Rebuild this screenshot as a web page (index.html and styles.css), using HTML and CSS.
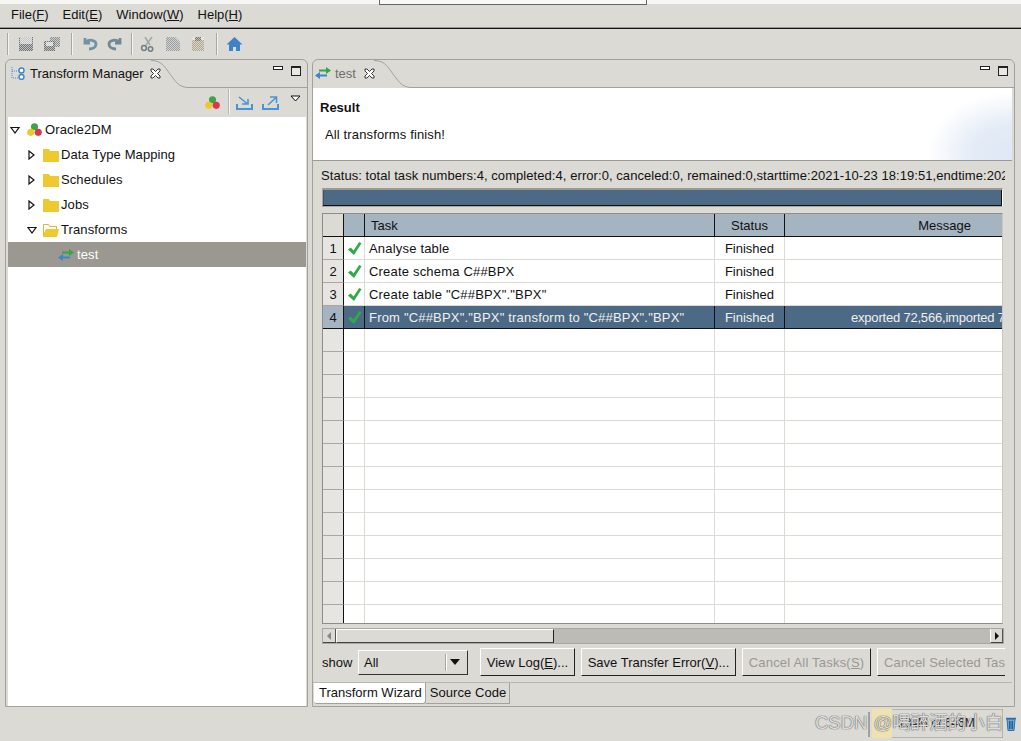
FILE: index.html
```html
<!DOCTYPE html>
<html lang="en">
<head>
<meta charset="utf-8">
<title>Oracle2DM Transform Manager</title>
<link rel="stylesheet" href="styles.css">
</head>
<body>
<svg class="defs" width="0" height="0" aria-hidden="true"><defs>
  <pattern id="hatch" width="2" height="2" patternUnits="userSpaceOnUse"><rect width="1" height="1" fill="#fff" fill-opacity=".55"/><rect x="1" y="1" width="1" height="1" fill="#fff" fill-opacity=".55"/></pattern>
</defs></svg>
<div class="app">
  <div class="top-strip"><span class="strip-tab"></span></div>
  <nav class="menubar">
    <span class="menu">File(<u>F</u>)</span>
    <span class="menu">Edit(<u>E</u>)</span>
    <span class="menu">Window(<u>W</u>)</span>
    <span class="menu">Help(<u>H</u>)</span>
  </nav>
  <div class="toolbar">
    <span class="sep"></span>
    <svg class="tool" viewBox="0 0 16 16"><rect x="1" y="1" width="14" height="14" fill="#6f7476"/><rect x="2" y="1" width="12" height="7" fill="#c4c4c2"/><rect x="1" y="1" width="14" height="14" fill="url(#hatch)"/></svg>
    <svg class="tool wide" viewBox="0 0 18 16"><rect x="7" y="1" width="10" height="10" fill="#8f8f8d"/><rect x="1" y="5" width="11" height="10" fill="#6f7476"/><rect x="3" y="6" width="7" height="4" fill="#d0d0ce"/><path d="M7 1h10v10h-5v4H1V5h6z" fill="url(#hatch)"/></svg>
    <span class="sep s2"></span>
    <svg class="tool" viewBox="0 0 16 16"><path d="M3 2v5h5M4 6c3-3 10-2 10 2 0 3-3 5-7 5" fill="none" stroke="#6f94a6" stroke-width="2.800"/></svg>
    <svg class="tool" viewBox="0 0 16 16"><path d="M13 2v5H8M12 6C9 3 2 4 2 8c0 3 3 5 7 5" fill="none" stroke="#6f8a96" stroke-width="2.800"/></svg>
    <span class="sep s3"></span>
    <svg class="tool" viewBox="0 0 16 16"><path d="M12 1 6 9M5 1l5 8" fill="none" stroke="#a5a8a8" stroke-width="1.600"/><circle cx="4" cy="12" r="2.400" fill="none" stroke="#6f7f88" stroke-width="1.500"/><circle cx="10.500" cy="13" r="2.200" fill="none" stroke="#6f7f88" stroke-width="1.500"/></svg>
    <svg class="tool" viewBox="0 0 16 16"><path d="M1 1h9l5 5v9H1z" fill="#9a9d9d"/><path d="M1 1h9l5 5v9H1z" fill="url(#hatch)"/></svg>
    <svg class="tool" viewBox="0 0 16 16"><path d="M2 4h12v11H2z" fill="#b0a58e"/><path d="M5 1h6v4H5z" fill="#77746c"/><path d="M2 1h12v14H2z" fill="url(#hatch)"/></svg>
    <span class="sep s4"></span>
    <svg class="tool home" viewBox="0 0 16 16"><path d="M8 1 0 8.500h2.500V15h4v-4h3v4h4V8.500H16z" fill="#3d83c6"/></svg>
  </div>

  <div class="workspace">
    <section class="panel left">
      <header class="panel-head">
        <div class="tab long">
          <svg class="tab-ic" viewBox="0 0 14 14"><path d="M1 1v11h8M1 5h8" fill="none" stroke="#4a8ccc" stroke-dasharray="1 1"/><circle cx="10.500" cy="4.500" r="2.500" fill="#fff" stroke="#3f86c9" stroke-width="1.400"/><circle cx="10.500" cy="11" r="2.500" fill="#fff" stroke="#3f86c9" stroke-width="1.400"/></svg>
          <span class="tab-label">Transform Manager</span>
          <svg class="close" viewBox="0 0 11 11"><path d="M1 1h2l2.500 2.500L8 1h2v2L7.500 5.500 10 8v2H8L5.500 7.500 3 10H1V8l2.500-2.500L1 3z" fill="#fff" stroke="#222" stroke-width=".9"/></svg>
          <svg class="curve" viewBox="0 0 36 28"><path d="M0 .5C12 .5 14 8 22 18 27 25 30 26.500 36 27.500" fill="none" stroke="#a3a19c"/></svg>
        </div>
        <div class="win-btns"><span class="min"></span><span class="max"></span></div>
      </header>
      <div class="view-tools">
        <svg class="dots" viewBox="0 0 16 16"><circle cx="8" cy="5" r="3.800" fill="#3aa648"/><circle cx="4" cy="11" r="3.800" fill="#edc82c"/><circle cx="12" cy="11" r="3.800" fill="#d9364f"/></svg>
        <span class="vsep"></span>
        <svg class="io" viewBox="0 0 17 14"><path d="M1 8v5h15V8" fill="none" stroke="#4a94d6" stroke-width="2"/><path d="M3 1l8 6.500M12 3v5H6" fill="none" stroke="#4a94d6" stroke-width="1.600"/></svg>
        <svg class="io" viewBox="0 0 17 14"><path d="M1 8v5h15V8" fill="none" stroke="#4a94d6" stroke-width="2"/><path d="M6 9l8-7.500M8 1h6.500v6" fill="none" stroke="#4a94d6" stroke-width="1.600"/></svg>
        <svg class="menu-tri" viewBox="0 0 11 7"><path d="M1 1h9L5.500 6z" fill="#fff" stroke="#111"/></svg>
      </div>
      <div class="tree">
        <div class="node n0"><svg class="tw" viewBox="0 0 10 9"><path d="M1 2h8L5 7.500z" fill="#fff" stroke="#111" stroke-width="1.200"/></svg><svg class="dots small" viewBox="0 0 16 16"><circle cx="8" cy="5" r="3.800" fill="#3aa648"/><circle cx="4" cy="11" r="3.800" fill="#edc82c"/><circle cx="12" cy="11" r="3.800" fill="#d9364f"/></svg><span>Oracle2DM</span></div>
        <div class="node n1"><svg class="tw" viewBox="0 0 10 10"><path d="M2 1v8l5-4z" fill="#fff" stroke="#111" stroke-width="1.200"/></svg><svg class="folder" viewBox="0 0 16 14"><path d="M0 1h6l1 2h9v11H0z" fill="#eec92f"/></svg><span>Data Type Mapping</span></div>
        <div class="node n1"><svg class="tw" viewBox="0 0 10 10"><path d="M2 1v8l5-4z" fill="#fff" stroke="#111" stroke-width="1.200"/></svg><svg class="folder" viewBox="0 0 16 14"><path d="M0 1h6l1 2h9v11H0z" fill="#eec92f"/></svg><span>Schedules</span></div>
        <div class="node n1"><svg class="tw" viewBox="0 0 10 10"><path d="M2 1v8l5-4z" fill="#fff" stroke="#111" stroke-width="1.200"/></svg><svg class="folder" viewBox="0 0 16 14"><path d="M0 1h6l1 2h9v11H0z" fill="#eec92f"/></svg><span>Jobs</span></div>
        <div class="node n1"><svg class="tw" viewBox="0 0 10 9"><path d="M1 2h8L5 7.500z" fill="#fff" stroke="#111" stroke-width="1.200"/></svg><svg class="folder" viewBox="0 0 16 14"><path d="M.5 1.500h5l1 2h7V7H3L.5 13z" fill="#fff" stroke="#d9b92e"/><path d="M3 6h13l-2 8H0z" fill="#eec92f"/></svg><span>Transforms</span></div>
        <div class="node n2 selected"><svg class="arrows" viewBox="0 0 16 14"><path d="M4 4.500h8" stroke="#35a548" stroke-width="2"/><path d="M11 1l5 3.500L11 8z" fill="#35a548"/><path d="M12 9.500H4" stroke="#3f86c9" stroke-width="2"/><path d="M5 6l-5 3.500L5 13z" fill="#3f86c9"/></svg><span>test</span></div>
      </div>
    </section>

    <section class="panel right">
      <header class="panel-head">
        <div class="tab short">
          <svg class="arrows" viewBox="0 0 16 14"><path d="M4 4.500h8" stroke="#35a548" stroke-width="2"/><path d="M11 1l5 3.500L11 8z" fill="#35a548"/><path d="M12 9.500H4" stroke="#3f86c9" stroke-width="2"/><path d="M5 6l-5 3.500L5 13z" fill="#3f86c9"/></svg>
          <span class="tab-label grey">test</span>
          <svg class="close" viewBox="0 0 11 11"><path d="M1 1h2l2.500 2.500L8 1h2v2L7.500 5.500 10 8v2H8L5.500 7.500 3 10H1V8l2.500-2.500L1 3z" fill="#fff" stroke="#222" stroke-width=".9"/></svg>
          <svg class="curve" viewBox="0 0 36 28"><path d="M0 .5C12 .5 14 8 22 18 27 25 30 26.500 36 27.500" fill="none" stroke="#a3a19c"/></svg>
        </div>
        <div class="win-btns"><span class="min"></span><span class="max"></span></div>
      </header>
      <div class="result">
        <h1>Result</h1>
        <p>All transforms finish!</p>
      </div>
      <div class="content">
        <div class="status-line">Status: total task numbers:4, completed:4, error:0, canceled:0, remained:0,starttime:2021-10-23 18:19:51,endtime:202</div>
        <div class="progress"></div>
        <div class="grid-wrap">
          <div class="row head">
            <div class="c num"></div><div class="c ico"></div><div class="c task">Task</div><div class="c stat">Status</div><div class="c msg">Message</div>
          </div>
          <div class="row"><div class="c num">1</div><div class="c ico"><svg class="check" viewBox="0 0 16 16"><path d="M1 9l3-2 3 3 6-9 2.500 1.500L7.500 15z" fill="#2eaa4a"/></svg></div><div class="c task">Analyse table</div><div class="c stat">Finished</div><div class="c msg"></div></div>
          <div class="row"><div class="c num">2</div><div class="c ico"><svg class="check" viewBox="0 0 16 16"><path d="M1 9l3-2 3 3 6-9 2.500 1.500L7.500 15z" fill="#2eaa4a"/></svg></div><div class="c task">Create schema C##BPX</div><div class="c stat">Finished</div><div class="c msg"></div></div>
          <div class="row"><div class="c num">3</div><div class="c ico"><svg class="check" viewBox="0 0 16 16"><path d="M1 9l3-2 3 3 6-9 2.500 1.500L7.500 15z" fill="#2eaa4a"/></svg></div><div class="c task">Create table "C##BPX"."BPX"</div><div class="c stat">Finished</div><div class="c msg"></div></div>
          <div class="row sel"><div class="c num">4</div><div class="c ico"><svg class="check" viewBox="0 0 16 16"><path d="M1 9l3-2 3 3 6-9 2.500 1.500L7.500 15z" fill="#2eaa4a"/></svg></div><div class="c task">From "C##BPX"."BPX" transform to "C##BPX"."BPX"</div><div class="c stat">Finished</div><div class="c msg">exported 72,566,imported 7</div></div>
          <div class="row"><div class="c num"></div><div class="c ico"></div><div class="c task"></div><div class="c stat"></div><div class="c msg"></div></div>
          <div class="row"><div class="c num"></div><div class="c ico"></div><div class="c task"></div><div class="c stat"></div><div class="c msg"></div></div>
          <div class="row"><div class="c num"></div><div class="c ico"></div><div class="c task"></div><div class="c stat"></div><div class="c msg"></div></div>
          <div class="row"><div class="c num"></div><div class="c ico"></div><div class="c task"></div><div class="c stat"></div><div class="c msg"></div></div>
          <div class="row"><div class="c num"></div><div class="c ico"></div><div class="c task"></div><div class="c stat"></div><div class="c msg"></div></div>
          <div class="row"><div class="c num"></div><div class="c ico"></div><div class="c task"></div><div class="c stat"></div><div class="c msg"></div></div>
          <div class="row"><div class="c num"></div><div class="c ico"></div><div class="c task"></div><div class="c stat"></div><div class="c msg"></div></div>
          <div class="row"><div class="c num"></div><div class="c ico"></div><div class="c task"></div><div class="c stat"></div><div class="c msg"></div></div>
          <div class="row"><div class="c num"></div><div class="c ico"></div><div class="c task"></div><div class="c stat"></div><div class="c msg"></div></div>
          <div class="row"><div class="c num"></div><div class="c ico"></div><div class="c task"></div><div class="c stat"></div><div class="c msg"></div></div>
          <div class="row"><div class="c num"></div><div class="c ico"></div><div class="c task"></div><div class="c stat"></div><div class="c msg"></div></div>
          <div class="row"><div class="c num"></div><div class="c ico"></div><div class="c task"></div><div class="c stat"></div><div class="c msg"></div></div>
          <div class="row"><div class="c num"></div><div class="c ico"></div><div class="c task"></div><div class="c stat"></div><div class="c msg"></div></div>
        </div>
        <div class="hscroll">
          <span class="sb-btn"><span class="tri-l"></span></span>
          <span class="sb-thumb"></span>
          <span class="sb-track"></span>
          <span class="sb-btn"><span class="tri-r"></span></span>
        </div>
        <div class="actions">
          <span class="show">show</span>
          <div class="combo"><span class="combo-val">All</span><span class="combo-sep"></span><span class="combo-arrow"></span></div>
          <button class="btn b1">View Log(<u>E</u>)...</button>
          <button class="btn b2">Save Transfer Error(<u>V</u>)...</button>
          <button class="btn b3 off">Cancel All Tasks(<u>S</u>)</button>
          <button class="btn b4 off">Cancel Selected Tas</button>
        </div>
      </div>
      <div class="bottom-tabs">
        <span class="btab active">Transform Wizard</span>
        <span class="btab">Source Code</span>
      </div>
    </section>
  </div>

  <footer class="statusbar">
    <span class="yellow"></span>
    <span class="heap">134M of 646M</span>
    <svg class="trash" viewBox="0 0 12 15"><path d="M2 3h8l-1 11.500H3z" fill="#6fa5d2" stroke="#2d6fa8"/><path d="M4.500 5v8M6 5v8M7.500 5v8" stroke="#1f5f96"/><path d="M1 2.500h10" stroke="#2d6fa8" stroke-width="1.500"/></svg>
    <span class="watermark">CSDN<span class="bar"></span>@喝醉酒的小白</span>
  </footer>
</div>
</body>
</html>
```
FILE: styles.css
```css
* { box-sizing: border-box; }
html, body { margin: 0; padding: 0; }
body { width: 1021px; height: 741px; overflow: hidden; background: #dcdad5; font-family: "Liberation Sans", Arial, sans-serif; font-size: 13px; color: #111; }
.defs { position: absolute; }
.app { width: 1021px; height: 741px; display: flex; flex-direction: column; position: relative; overflow: hidden; }
.top-strip { height: 5px; flex: none; background: linear-gradient(#f6f6f4 0 4px, #dcdad5 4px); }
.strip-tab { display: block; margin-left: 379px; width: 268px; height: 5px; border: 1px solid #666; border-top: 0; background: #f8f8f6; }
.menubar { height: 24px; flex: none; display: flex; align-items: center; padding: 0 0 4px 11px; gap: 14px; border-bottom: 1px solid #111; box-shadow: inset 0 -1px 0 #999; background: #dcdad5; font-size: 13px; }
.toolbar { height: 30px; flex: none; display: flex; align-items: center; padding-left: 7px; }
.sep { width: 2px; height: 22px; background: #a9a7a3; border-right: 1px solid #f4f4f2; margin-right: 9px; }
.s2 { margin-left: 10px; margin-right: 9px; }
.s3 { margin-left: -1px; margin-right: 7px; }
.s4 { margin-left: 1px; margin-right: 8px; }
.tool { width: 16px; height: 16px; margin-right: 9px; flex: none; }
.tool.wide { width: 18px; margin-right: 0; }
.tool:last-child { margin-right: 0; }
.home { width: 17px; height: 16px; }
.workspace { flex: none; height: 648px; display: flex; gap: 4px; padding-left: 5px; }
.panel { border: 1px solid #a3a19c; border-radius: 6px 6px 0 0; display: flex; flex-direction: column; height: 648px; }
.left { width: 303px; }
.right { width: 703px; }
.panel-head { height: 28px; flex: none; display: flex; }
.tab { height: 28px; flex: none; display: flex; align-items: center; position: relative; padding-bottom: 2px; }
.long { width: 181px; padding-left: 5px; }
.short { width: 97px; padding-left: 2px; }
.curve { position: absolute; right: 0; top: 0; width: 36px; height: 28px; }
.tab-ic { width: 14px; height: 14px; flex: none; margin-right: 5px; }
.tab-label { font-size: 13px; margin-right: 6px; }
.tab-label.grey { color: #6e6e6e; margin-left: 4px; margin-right: 8px; }
.close { width: 11px; height: 11px; flex: none; }
.arrows { width: 16px; height: 14px; flex: none; }
.win-btns { flex: 1; height: 28px; display: flex; justify-content: flex-end; align-items: flex-start; gap: 8px; padding: 6px 6px 0 0; border-bottom: 1px solid #a3a19c; }
.min { display: block; width: 10px; height: 4px; border: 1px solid #222; background: #fff; }
.max { display: block; width: 10px; height: 10px; border: 1px solid #222; border-top-width: 2px; background: #e8e7e3; }
.view-tools { height: 29px; flex: none; display: flex; align-items: flex-start; padding: 0 0 0 199px; background: #dcdad5; }
.dots { width: 15px; height: 15px; flex: none; margin-top: 7px; margin-right: 8px; }
.vsep { width: 2px; height: 25px; margin-top: 1px; background: #b9b7b2; border-right: 1px solid #f4f4f2; margin-right: 6px; }
.io { width: 17px; height: 14px; flex: none; margin-top: 8px; margin-right: 9px; }
.menu-tri { width: 11px; height: 7px; flex: none; margin-top: 7px; margin-left: 2px; }
.tree { flex: 1; margin: 0 1px 0 2px; background: #fff; }
.node { height: 25px; display: flex; align-items: center; font-size: 13px; letter-spacing: .1px; }
.n0 { padding-left: 2px; }
.n1 { padding-left: 19px; }
.n2 { padding-left: 50px; }
.tw { width: 10px; height: 10px; flex: none; margin-right: 6px; }
.n0 .tw { margin-right: 7px; }
.n0 .dots { margin: 0 3px 0 0; width: 15px; height: 15px; }
.folder { width: 16px; height: 14px; flex: none; margin-right: 2px; }
.selected { background: #9a9890; color: #fff; }
.selected .tab, .selected .arrows { margin-right: 3px; }
.result { height: 73px; flex: none; margin: 0 2px 0 0; background: radial-gradient(ellipse 85px 62px at 100% 92%, #dfe8f5 0, #e3ebf6 45%, rgba(255,255,255,0) 100%), #fff; border-bottom: 1px solid #9b9b96; padding: 12px 0 0 7px; }
.result h1 { margin: 0; font-size: 13px; font-weight: bold; line-height: 16px; }
.result p { margin: 11px 0 0 5px; font-size: 13px; line-height: 16px; letter-spacing: .14px; }
.content { flex: 1; min-height: 0; padding: 0 9px 0 8px; display: flex; flex-direction: column; overflow: hidden; }
.status-line { height: 27px; padding: 7px 0 0 0; font-size: 13px; line-height: 16px; white-space: nowrap; flex: none; letter-spacing: .065px; overflow: hidden; }
.progress { height: 19px; flex: none; margin: 0 2px 6px 1px; background: #4c6a85; border: 1px solid #a9a7a3; border-right-color: #fff; border-top: 2px solid #9c9a95; box-shadow: inset -1px -1px 0 #111, inset 1px 0 0 #38526a; }
.grid-wrap { flex: none; height: 411px; margin: 0 2px 0 1px; border: 1px solid #8f8d88; border-right-color: #c9c7c2; background: #fff; overflow: hidden; }
.row { height: 23px; display: grid; grid-template-columns: 21px 21px 350px 70px 1fr; }
.c { border-right: 1px solid #dcdad5; border-bottom: 1px solid #dcdad5; font-size: 13px; line-height: 22px; padding-top: 1px; white-space: nowrap; overflow: hidden; }
.head .c { background: #a4b4c1; border-right: 1px solid #111; border-bottom: 1px solid #111; }
.num { background: #e7e5e1; text-align: center; border-right: 1px solid #111; border-bottom: 1px solid #a9a7a3; }
.head .num { background: #dcdad5; }
.ico { display: flex; align-items: center; justify-content: center; padding-top: 0; }
.task { padding-left: 4px; letter-spacing: .19px; }
.head .task { padding-left: 6px; letter-spacing: 0; }
.stat { text-align: center; }
.msg { border-right: 0; letter-spacing: -.2px; padding-left: 66px; }
.head .msg { text-align: center; padding: 1px 0 0 102px; border-right: 0; letter-spacing: 0; }
.check { width: 15px; height: 15px; }
.sel .c { background: #4c6a85; color: #f0f0f0; border-bottom: 1px solid #111; }
.sel .num { background: #a4b4c1; color: #111; }
.sel .ico, .sel .task, .sel .stat { border-right: 1px solid #111; }
.sel .msg { border-right: 0; }
.hscroll { height: 16px; margin: 4px 1px 0 1px; flex: none; display: flex; background: #bdbbb5; border: 1px solid #a9a7a3; }
.sb-btn { width: 13px; background: #dcdad5; border-right: 1px solid #555; border-bottom: 1px solid #444; display: flex; align-items: center; justify-content: center; flex: none; }
.sb-btn:last-child { border-left: 1px solid #fff; }
.sb-thumb { width: 218px; background: #dcdad5; border-right: 1px solid #222; border-bottom: 1px solid #444; border-left: 1px solid #fff; border-top: 1px solid #fff; }
.sb-track { flex: 1; }
.tri-l { border-top: 4px solid transparent; border-bottom: 4px solid transparent; border-right: 4px solid #888; }
.tri-r { border-top: 4px solid transparent; border-bottom: 4px solid transparent; border-left: 4px solid #111; }
.actions { display: flex; align-items: center; margin-top: 4px; padding-left: 1px; height: 28px; flex: none; font-size: 13px; white-space: nowrap; overflow: hidden; }
.show { width: 36px; flex: none; }
.combo { width: 110px; height: 25px; flex: none; display: flex; align-items: center; border: 1px solid #fff; border-right-color: #333; border-bottom-color: #333; padding-left: 5px; background: #dcdad5; }
.combo-val { flex: 1; }
.combo-sep { width: 2px; height: 17px; background: #a9a7a3; border-right: 1px solid #fff; margin-right: 3px; }
.combo-arrow { margin-right: 7px; border-left: 5px solid transparent; border-right: 5px solid transparent; border-top: 6px solid #111; }
.btn { height: 28px; flex: none; padding: 0; font: inherit; color: #111; background: #dcdad5; border: 1px solid #fff; border-right-color: #222; border-bottom-color: #222; margin-left: 6px; white-space: nowrap; overflow: hidden; }
.b1 { width: 95px; margin-left: 12px; }
.b2 { width: 155px; }
.b3 { width: 129px; letter-spacing: .2px; }
.b4 { width: 130px; text-align: left; padding-left: 6px; border-right: 0; letter-spacing: .15px; }
.off { color: #9a9893; }
.bottom-tabs { height: 24px; flex: none; display: flex; align-items: flex-start; border-top: 1px solid #b9b7b2; margin-right: 2px; padding-left: 1px; }
.btab { height: 21px; padding: 0 3px 0 4px; line-height: 19px; font-size: 13px; border-right: 1px solid #a3a19c; border-bottom: 1px solid #a3a19c; letter-spacing: .05px; }
.btab.active { background: #fff; border-radius: 0 0 3px 3px; padding: 0 3px 0 5px; letter-spacing: 0; }
.statusbar { flex: 1; position: relative; }
.yellow { position: absolute; left: 872px; top: 2px; width: 20px; height: 29px; background: #f0e2ae; }
.heap { position: absolute; left: 892px; top: 2px; width: 111px; height: 29px; line-height: 27px; font-size: 12px; padding-left: 6px; border: 1px solid #b5b3ae; border-left: 0; color: #222; white-space: nowrap; overflow: hidden; }
.trash { position: absolute; left: 1005px; top: 9px; width: 12px; height: 15px; }
.watermark { position: absolute; left: 815px; top: 4px; font-size: 18.500px; line-height: 24px; color: rgba(245,245,245,.85); white-space: nowrap; text-shadow: 0 0 1px #555, 0 0 1px #555; font-family: "Liberation Sans", "Noto Sans CJK SC", sans-serif; }
.bar { display: inline-block; width: 2px; height: 25px; background: rgba(140,140,140,.75); margin: 0 3px 0 1px; vertical-align: middle; }
```
